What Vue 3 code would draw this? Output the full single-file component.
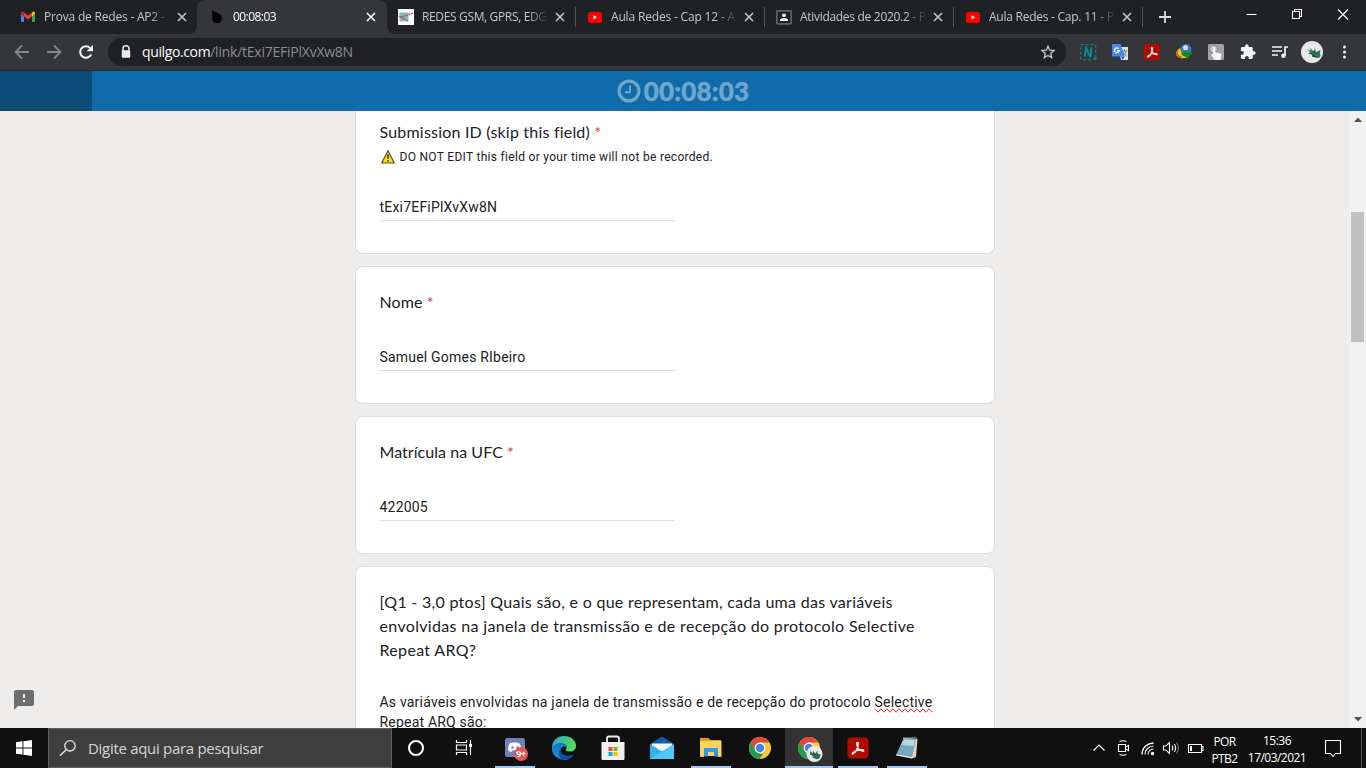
<script setup>
const tabs = [
  { icon: 'gmail', text: 'Prova de Redes - AP2 -', fit: 'f1' },
  { icon: 'drop', text: '00:08:03', fit: 'f2', active: true },
  { icon: 'redes', text: 'REDES GSM, GPRS, EDG', fit: 'f3' },
  { icon: 'youtube', text: 'Aula Redes - Cap 12 - A', fit: 'f4', sep: true },
  { icon: 'class', text: 'Atividades de 2020.2 - P', fit: 'f5', sep: true },
  { icon: 'youtube', text: 'Aula Redes - Cap. 11 - P', fit: 'f6', sep: true },
]
const fields = [
  { title: 'Nome', fit: 't2', value: 'Samuel Gomes RIbeiro', vfit: 'v2' },
  { title: 'Matrícula na UFC', fit: 't3', value: '422005', vfit: 'v3' },
]
</script>

<template>
  <div class="screen">
    <header class="strip">
      <div class="tabs">
        <div v-for="(t, i) in tabs" :key="i" class="tab" :class="{ active: t.active, sep: t.sep }">
          <svg v-if="t.icon === 'gmail'" class="fav" viewBox="0 0 16 16">
            <path d="M1 5v7.2c0 .5.4.8.8.8H4V7.2z" fill="#4285f4" />
            <path d="M15 5v7.2c0 .5-.4.8-.8.8H12V7.2z" fill="#34a853" />
            <path d="M12 3.6v3.8l3-2.2V4.2c0-1.4-1.500-2.100-2.500-1.200z" fill="#fbbc04" />
            <path d="M4 7.400V3.500l4 3 4-3v3.900l-4 3z" fill="#ea4335" />
            <path d="M1 4.200v1l3 2.200V3.500L3.500 3C2.500 2.100 1 2.800 1 4.200z" fill="#c5221f" />
          </svg>
          <svg v-else-if="t.icon === 'drop'" class="fav" viewBox="0 0 16 16">
            <path d="M3 1.300c3 2 6 2.500 8.300 4.300 2.600 2.500 2.200 8.400-3 8.400C4.500 14 3.300 11.500 3.300 8.500z" fill="#000" />
          </svg>
          <svg v-else-if="t.icon === 'redes'" class="fav" viewBox="0 0 16 16">
            <path d="M0 0h16v16H0z" fill="#fff" />
            <path d="M1.500 3.500h9v9h-9z" fill="#7fbdba" />
            <path d="M15 4 9 6.300 2 8l5 2.200 3 1.600" fill="none" stroke="#c2465a" stroke-width="1.200" stroke-dasharray="2 .6" />
          </svg>
          <svg v-else-if="t.icon === 'youtube'" class="fav" viewBox="0 0 16 16">
            <rect x="1" y="3" width="14" height="11" rx="2.500" fill="#f00" />
            <path d="M6.500 6.200v4.200L10 8.300z" fill="#fff" />
          </svg>
          <svg v-else class="fav" viewBox="0 0 16 16">
            <rect x=".8" y="1.800" width="14.400" height="13" rx="1" fill="#202124" stroke="#5f6368" stroke-width="1.800" />
            <circle cx="8" cy="6.300" r="1.900" fill="#f1f3f4" />
            <path d="M4 12v-1c0-1.400 2.500-2 4-2s4 .6 4 2v1z" fill="#f1f3f4" />
          </svg>
          <span class="label"><span :class="t.fit">{{ t.text }}</span></span>
          <svg class="x" viewBox="0 0 16 16"><path d="m4 4 8 8m0-8-8 8" /></svg>
        </div>
        <svg class="plus" viewBox="0 0 16 16"><path d="M8 2v12M2 8h12" stroke="#dadce0" stroke-width="1.800" /></svg>
      </div>
      <div class="winctl">
        <svg viewBox="0 0 46 28"><path d="M18.500 14.500h10" /></svg>
        <svg viewBox="0 0 46 28"><path d="M18.500 11.500h7v7h-7zM20.500 11.500v-2h7v7h-2" /></svg>
        <svg viewBox="0 0 46 28"><path d="m18 9.500 10 10m0-10-10 10" /></svg>
      </div>
    </header>

    <nav class="toolbar">
      <svg class="cell" viewBox="0 0 32 32"><path d="M23 16H10M16 9.500 9.500 16l6.500 6.500" fill="none" stroke="#85878a" stroke-width="1.800" /></svg>
      <svg class="cell" viewBox="0 0 32 32"><path d="M9 16H22M16 9.500l6.500 6.500-6.500 6.500" fill="none" stroke="#85878a" stroke-width="1.800" /></svg>
      <svg class="cell" viewBox="0 0 32 32"><path d="M21.200 18.500a5.800 5.800 0 1 1-1.100-6.600" fill="none" stroke="#f1f3f4" stroke-width="2.100" /><path d="M23 8.800v6.400h-6.400z" fill="#f1f3f4" /></svg>
      <div class="omni">
        <svg class="lock" viewBox="0 0 12 16"><path d="M3 7V4.800a3 3 0 0 1 6 0V7" fill="none" stroke="#e8eaed" stroke-width="1.500" /><rect x="1.800" y="6.300" width="8.400" height="7.500" rx="1" fill="#e8eaed" /></svg>
        <span class="url"><b>quilgo.com</b><i>/link/tExi7EFiPlXvXw8N</i></span>
        <svg class="star" viewBox="0 0 16 16"><path d="m8 2.200 1.700 4 4.300.4-3.300 2.800 1 4.200L8 11.400l-3.700 2.200 1-4.200L2 6.600l4.300-.4z" fill="none" stroke="#c8cacd" stroke-width="1.300" /></svg>
      </div>
      <svg class="cell" viewBox="0 0 32 32">
        <rect x="8.700" y="8.700" width="15" height="15" fill="none" stroke="#0f7f8a" stroke-width="1.200" stroke-dasharray="3 2" />
        <path d="M12.800 20.500c.6-3 .7-6 1.500-8.500 1.500 2 1.500 6 4 8.500.8-2.500.5-5.500 1-9" fill="none" stroke="#0b8794" stroke-width="2.200" />
        <path d="M21 22.500h5v3h-5z" fill="#35363a" /><path d="M23 20.500v4M21 22.500h4" stroke="#0f8b98" />
      </svg>
      <svg class="cell" viewBox="0 0 32 32">
        <path d="M14 11h10v13h-7z" fill="#d9dcdf" />
        <path d="M8 8h8.500l4.300 12.500H9.200C8.500 20.500 8 20 8 19.400z" fill="#4688f1" />
        <path d="m17 20.500 1.300 3.500 2.500-3.500z" fill="#2a56c6" />
        <path d="M14.600 12.600a2.400 2.400 0 1 0 .6 2h-2.300" fill="none" stroke="#fff" stroke-width="1.200" />
        <path d="M18 15h5m-2.500-1.500V15m1.500.2c-.5 2-1.500 3.300-3 4m0-3c.8 1.500 2 2.700 3.500 3.600" fill="none" stroke="#607d8b" />
      </svg>
      <svg class="cell" viewBox="0 0 32 32">
        <rect x="8" y="8" width="16" height="16" rx="2.500" fill="#b30b00" />
        <path d="M15.500 11.500c1.200-.6 1.300.8.800 3-.7 2.500-2 4.800-3.800 6.300-.8.500-1.400-.1-.5-.9 2.300-1.900 5.500-2.600 8.300-2.300 1.100.2 1.100 1.100.1 1-2.300-.1-4-2.200-4.800-4.500-.3-1.300-.5-2.200-.1-2.600z" fill="none" stroke="#fff" stroke-width="1.100" />
      </svg>
      <svg class="cell" viewBox="0 0 32 32">
        <circle cx="18" cy="13.500" r="5.500" fill="#3c74c4" /><circle cx="17.500" cy="11.800" r="2.500" fill="#d7e9f8" />
        <path d="M12.500 12c-5 2-6 7-1.500 9.500 3 1.500 6 .8 8-.5l-1-3c-3 .5-5.500-1-5.500-6z" fill="#f0c818" />
        <path d="M10 14.500c-2 2-1 5.500 3.500 7" fill="none" stroke="#d64b29" stroke-width="1.500" />
        <path d="m13 17.500 3-1.800 9 .8-7 7.500.3-3.200c-2 .3-4.300-1.300-5.300-3.300z" fill="#108a1c" />
      </svg>
      <svg class="cell" viewBox="0 0 32 32">
        <rect x="8" y="8" width="16" height="16" rx="1.500" fill="#a3a3a3" />
        <circle cx="13.500" cy="13" r="4" fill="#c9c9c9" stroke="#858585" />
        <path d="M13 12c0-1.200 2-1.200 2 0v4l5 1.200c1.300.3 1.500 1 1.300 2L20.500 24h-5.800L11.500 19.500c-.5-1 .5-1.600 1.500-.8z" fill="#f4f6f9" />
      </svg>
      <svg class="cell" viewBox="0 0 32 32"><path transform="translate(7.500 7.500) scale(.7)" d="M20.500 11H19V7c0-1.100-.9-2-2-2h-4V3.500a2.500 2.500 0 0 0-5 0V5H4c-1.100 0-2 .9-2 2v3.800h1.500a2.700 2.700 0 0 1 0 5.400H2V20c0 1.100.9 2 2 2h3.800v-1.500a2.700 2.700 0 0 1 5.400 0V22H17c1.100 0 2-.9 2-2v-4h1.500a2.500 2.500 0 0 0 0-5z" fill="#f1f3f4" /></svg>
      <svg class="cell" viewBox="0 0 32 32"><path d="M8 11h10M8 15h10M8 19h6M21 20V11h3" fill="none" stroke="#f1f3f4" stroke-width="1.700" /><circle cx="19.400" cy="19.800" r="2.200" fill="#f1f3f4" /></svg>
      <svg class="cell" viewBox="0 0 32 32"><circle cx="16" cy="16" r="11" fill="#e9e7e8" /><path d="m11 12.500 3.500 2.500-.5-3 3.500 3.500 1.500-3 1 3.500 4.500-2-.5 3 .5 3-1.500 2-4-.5-3.500-1.500 1-1-4.500-1.500 2-1z" fill="#2f7754" /><path d="m15 17 3 3m-1-5 3 3m-4 2 5 1" stroke="#173f2e" stroke-width=".9" /></svg>
      <svg class="cell" viewBox="0 0 32 32"><g fill="#f1f3f4"><circle cx="16.500" cy="11" r="1.500" /><circle cx="16.500" cy="16" r="1.500" /><circle cx="16.500" cy="21" r="1.500" /></g></svg>
    </nav>

    <div class="timer">
      <div class="progress"></div>
      <svg class="clockicon" viewBox="0 0 24 24"><circle cx="12" cy="12" r="9.900" fill="none" stroke="#6fa6cc" stroke-width="3.200" /><path d="M13 6.500v6.700H8" fill="none" stroke="#6fa6cc" stroke-width="1.900" /></svg>
      <span class="time">00:08:03</span>
    </div>

    <main class="page">
      <div class="form">
        <section class="card first">
          <h2><span class="t1">Submission ID (skip this field)</span> <em>*</em></h2>
          <p class="desc">
            <svg viewBox="0 0 14 14"><path d="M7 .8 13.300 13H.7z" fill="#ffe000" stroke="#4a4a45" stroke-width="1.200" stroke-linejoin="round" /><path d="M7 4.500v4.300M7 10v1.500" stroke="#222" stroke-width="1.500" /></svg>
            <span class="d1">DO NOT EDIT this field or your time will not be recorded.</span>
          </p>
          <div class="input"><span class="v1">tExi7EFiPlXvXw8N</span></div>
        </section>
        <section v-for="f in fields" :key="f.title" class="card">
          <h2><span :class="f.fit">{{ f.title }}</span> <em>*</em></h2>
          <div class="input"><span :class="f.vfit">{{ f.value }}</span></div>
        </section>
        <section class="card last">
          <h2>
            <span class="q1">[Q1 - 3,0 ptos] Quais são, e o que representam, cada uma das variáveis</span><br />
            <span class="q2">envolvidas na janela de transmissão e de recepção do protocolo Selective</span><br />
            <span class="q3">Repeat ARQ?</span>
          </h2>
          <p class="answer">
            <span class="a1">As variáveis envolvidas na janela de transmissão e de recepção do protocolo <u>Selective</u></span><br />
            <span class="a2">Repeat ARQ são:</span>
          </p>
        </section>
      </div>
      <svg class="report" viewBox="0 0 20 20"><path d="M18 0H2C.9 0 0 .9 0 2v18l4-4h14c1.100 0 2-.9 2-2V2c0-1.100-.9-2-2-2zm-7 12H9v-2h2zm0-4H9V4h2z" fill="#6e6e6e" /></svg>
      <div class="scroll">
        <svg viewBox="0 0 17 17"><path d="M5 11h8L9 6.500z" fill="#505050" /></svg>
        <div class="thumb"></div>
        <svg viewBox="0 0 17 17"><path d="M5 6h8l-4 4.500z" fill="#505050" /></svg>
      </div>
    </main>

    <footer class="task">
      <div class="start"><svg viewBox="0 0 16 16"><path d="M0 2.200 6.500 1.300v6.200H0zM7.400 1.200 16 0v7.500H7.400zM0 8.400h6.500v6.200L0 13.700zM7.400 8.400H16V16l-8.600-1.200z" fill="#fff" /></svg></div>
      <div class="search">
        <svg viewBox="0 0 18 18"><circle cx="11" cy="6.800" r="5.200" /><path d="M7.300 10.500 1 16.800" /></svg>
        <span>Digite aqui para pesquisar</span>
      </div>
      <div class="apps">
        <div class="app"><svg viewBox="0 0 28 28"><circle cx="14" cy="14" r="7" fill="none" stroke="#fff" stroke-width="2" /></svg></div>
        <div class="app"><svg viewBox="0 0 28 28"><path d="M6.500 6v2.500h10V6M6.500 21v-2.500h10V21M6.500 11h10v5h-10zM20.500 6v15" fill="none" stroke="#fff" stroke-width="1.200" /><path d="M19 10h3v3h-3z" fill="#fff" /></svg></div>
        <div class="app run a515">
          <svg viewBox="0 0 28 28">
            <rect x="4" y="4" width="20" height="19" rx="2" fill="#6f80bd" />
            <path d="M8.500 9.500c2-1.300 7.500-1.300 10 0 1.500 2.500 2 5 1.800 7-1.200 1-2.500 1.300-3.300 1.300l-1-1.500h-4.500l-1 1.500c-1.200 0-2.400-.5-3.300-1.300-.2-2 .3-4.500 1.300-7z" fill="#fff" /><circle cx="11.500" cy="13.500" r="1.300" fill="#6f80bd" /><circle cx="16.500" cy="13.500" r="1.300" fill="#6f80bd" />
          </svg>
          <span class="badge">9+</span>
        </div>
        <div class="app a563"><svg viewBox="0 0 28 28">
          <defs>
            <linearGradient id="eg" x1="0" y1="0" x2="1" y2=".3"><stop offset="0" stop-color="#23a6dd" /><stop offset="1" stop-color="#57d957" /></linearGradient>
            <linearGradient id="eb" x1="0" y1="0" x2="0" y2="1"><stop offset="0" stop-color="#1678c8" /><stop offset="1" stop-color="#1b8bd8" /></linearGradient>
          </defs>
          <path d="M2 14C2 6 8 2 14 2c8 0 12.500 5.500 12 10.500-.4 4-4 5.500-7 5-2.500-.4-4-1-3-2.500 1.600-2 .4-4.700-3-5.300C8.500 9 4 11 2 14z" fill="url(#eg)" />
          <path d="M2 14c1.500-3.500 5-5.500 9-5 3 .4 5 2 5.500 4-4-2-7 1.500-5.500 5 1.500 3.800 6.500 5.500 12.500 2.500C20 26 15 26.500 11.500 25.500 5 24 1.500 19 2 14z" fill="url(#eb)" />
          <path d="M11 14c-2 6 4 10 12.500 6.500-2.500 4.500-7 5.800-11 5.200-3.500-2-5-7.700-1.500-11.700z" fill="#0d4f9e" />
        </svg></div>
        <div class="app a612"><svg viewBox="0 0 28 28"><path d="M8 8.500V4.500C8 3 8.500 2.500 10 2.500h8c1.500 0 2 .5 2 2v4" fill="none" stroke="#eee" stroke-width="1.800" /><path d="M2.500 8h23v16.500c0 1-.5 1.500-1.500 1.500H4c-1 0-1.500-.5-1.500-1.500z" fill="#f0f0f0" /><path d="M9.500 13h4v4h-4z" fill="#f25022" /><path d="M14.500 13h4v4h-4z" fill="#7fba00" /><path d="M9.500 18h4v4h-4z" fill="#00a4ef" /><path d="M14.500 18h4v4h-4z" fill="#ffb900" /></svg></div>
        <div class="app a662"><svg viewBox="0 0 28 28"><path d="m2 10 12-7.500L26 10v15H2z" fill="#0f5fae" /><path d="M4 9.500h20v8H4z" fill="#f6f6f6" /><path d="m2 10 12 7.500L26 10v15H2z" fill="#31b1ee" /><path d="m2 25 12-7.500L26 10v15z" fill="#50c8fb" /></svg></div>
        <div class="app run a711"><svg viewBox="0 0 28 28"><path d="M3 4h8.500l2 2H24v5H3z" fill="#e8a20d" /><path d="M3 7h21.500v15H3z" fill="#fcd462" /><path d="M7 14h14v8.500h-4V18h-6v4.500H7z" fill="#3b97e0" /><path d="M3 22h4v1H3zM21 22h3.500v1H21z" fill="#e8b63b" /></svg></div>
        <div v-for="n in 2" :key="n" class="app" :class="n === 1 ? 'a760' : 'current'">
          <svg viewBox="0 0 28 28">
            <circle cx="14" cy="14" r="11" fill="#fcc934" />
            <path d="M4.500 8.500A11 11 0 0 1 23.500 8.500H14L8.500 16z" fill="#e04a3d" />
            <path d="M4.500 8.500 10 17l4 2.500 3 .5-3.500 5A11 11 0 0 1 4.500 8.500z" fill="#219c54" />
            <circle cx="14" cy="14" r="5.400" fill="#fff" /><circle cx="14" cy="14" r="4.200" fill="#3f83ee" />
            <template v-if="n === 2"><circle cx="19.500" cy="20" r="8" fill="#e9e9e9" /><path d="m15 17 3 2.500-.5-3 3 3 2-3v3l3 1-1 4-3 .7-4.500-2 1.500-.7-3.500-2z" fill="#2b6a4c" /></template>
          </svg>
        </div>
        <div class="app run a858"><svg viewBox="0 0 28 28"><rect x="3.500" y="3.500" width="21" height="21" rx="4" fill="#b30b00" /><path d="M13 8.500c1.500-.7 1.600 1 1 3.700-.9 3-2.500 6-4.700 7.600-1 .6-1.700-.2-.6-1.100 2.900-2.300 6.500-3.100 10-2.700 1.400.2 1.400 1.300.1 1.200-2.800-.2-4.800-2.600-5.800-5.400-.4-1.600-.6-2.800 0-3.300z" fill="none" stroke="#fff" stroke-width="1.300" /></svg></div>
        <div class="app run a906"><svg viewBox="0 0 28 28"><path d="m10 4 14.500 1-1.500 18-4 1.500z" fill="#d9d5c5" /><path d="M10.500 4.500 23 5l-4 18-15.500-3z" fill="#76a9bb" /><path d="M11 5.500 22 6l-1.500 6L8 11z" fill="#b3d8e2" /><path d="m3.500 20 15.500 3v1.500L3 21.500z" fill="#eee" /><path d="M10.500 4h13" stroke="#c8c8c8" stroke-dasharray="1 1" stroke-width="1.500" /></svg></div>
      </div>
      <div class="tray">
        <svg class="w24" viewBox="0 0 24 24"><path d="m6.500 14.500 5.500-5.500 5.500 5.500" /></svg>
        <svg class="w24" viewBox="0 0 24 24"><path d="M7.500 8.500h7v7h-7zM14.500 11l3-1.500v5l-3-1.500M8.500 5.500q3.500-1.500 7 0M8.500 18.500q3.500 1.500 7 0" /></svg>
        <svg class="w25" viewBox="0 0 25 24"><path d="M7 18.500A11.500 11.500 0 0 1 18.500 7" stroke="#888" /><path d="M10 18.500a8.500 8.500 0 0 1 8.500-8.500M13 18.500a5.500 5.500 0 0 1 5.500-5.500M7 17.500q.5-9 11.500-10.500" /><circle cx="17.500" cy="17.500" r="1.700" fill="#fff" stroke="none" /></svg>
        <svg class="w22" viewBox="0 0 22 24"><path d="M3.500 10v4h2.500l3.500 3.500v-11L6 10z" /><path d="M12 9.500q1.800 2.500 0 5M14.200 8q3 4 0 8" /><path class="dim" d="M16.500 6.500q4 5.500 0 11" /></svg>
        <svg class="w28" viewBox="0 0 28 24"><path d="M6.500 8.500h13v8h-13zM20 10.500h1v4h-1" /><path class="solid" d="M8 10h2v5H8z" /></svg>
        <div class="two lang"><span class="l1">POR</span><span class="l2">PTB2</span></div>
        <div class="two when"><span class="c1">15:36</span><span class="c2">17/03/2021</span></div>
        <svg class="w44" viewBox="0 0 44 24"><path d="M14.500 4.500h15v13h-5l-2.500 3-2.500-3h-5z" /></svg>
        <div class="peek"></div>
      </div>
    </footer>
  </div>
</template>

<style>
body { margin: 0; background: #eeedeb; overflow: hidden; }
</style>

<style scoped>
.screen { width: 1366px; height: 768px; display: flex; flex-direction: column; overflow: hidden; font-family: "Open Sans", "Noto Sans", sans-serif; }
svg { display: block; flex: none; }
.strip { height: 34px; background: #202124; display: flex; justify-content: space-between; flex: none; }
.tabs { display: flex; padding-left: 8px; align-items: stretch; }
.tab { width: 189px; box-sizing: border-box; padding-left: 12px; display: flex; align-items: center; position: relative; }
.tab.active { background: #35363a; border-radius: 8px 8px 0 0; width: 190px; margin-right: -1px; }
.tab.active::before, .tab.active::after { content: ""; position: absolute; bottom: 0; width: 8px; height: 8px; }
.tab.active::before { left: -8px; background: radial-gradient(circle at 0 0, #202124 7.5px, #35363a 8px); }
.tab.active::after { right: -8px; background: radial-gradient(circle at 100% 0, #202124 7.5px, #35363a 8px); }
.tab.sep::before { content: ""; position: absolute; left: 0; top: 7px; width: 1px; height: 20px; background: #53555a; }
.tab:nth-child(6)::after { content: ""; position: absolute; right: -1px; top: 7px; width: 1px; height: 20px; background: #53555a; }
.fav { width: 16px; height: 16px; margin-right: 8px; }
.label { width: 127px; font-size: 12px; line-height: 20px; color: #c4c8cd; white-space: nowrap; overflow: hidden; -webkit-mask-image: linear-gradient(90deg, #000 105px, transparent 127px); mask-image: linear-gradient(90deg, #000 105px, transparent 127px); }
.active .label { color: #fff; }
.x { width: 16px; height: 16px; margin-left: 3px; }
.x path { stroke: #c4c7cb; stroke-width: 1.6; }
.active .x path { stroke: #fff; }
.plus { width: 16px; height: 16px; margin-left: 15px; align-self: center; }
.winctl { display: flex; }
.winctl svg { width: 46px; height: 28px; }
.winctl path { fill: none; stroke: #fff; stroke-width: 1.1; }
.f1 { letter-spacing: -.2px; }
.f2 { letter-spacing: -.55px; }
.f3 { letter-spacing: -.35px; }
.f4 { letter-spacing: -.17px; }
.f5 { letter-spacing: -.3px; }
.f6 { letter-spacing: -.25px; }

.toolbar { height: 36px; background: #35363a; border-bottom: 1px solid #29292b; display: flex; align-items: center; padding-left: 6px; flex: none; }
.cell { width: 32px; height: 32px; }
.omni { width: 958px; height: 28px; margin: 0 6px; border-radius: 14px; background: #202124; display: flex; align-items: center; box-sizing: border-box; padding: 0 10px 0 12px; }
.lock { width: 12px; height: 16px; }
.url { font-size: 14px; line-height: 20px; margin-left: 10px; flex: 1; white-space: nowrap; }
.url b { font-weight: 400; color: #fff; letter-spacing: -.38px; }
.url i { font-style: normal; color: #8b8e92; letter-spacing: -.24px; }
.star { width: 16px; height: 16px; }

.timer { height: 40px; background: #0f6ba9; display: flex; align-items: center; justify-content: center; position: relative; flex: none; }
.progress { position: absolute; left: 0; top: 0; width: 92px; height: 40px; background: #0a4b77; }
.clockicon { width: 24px; height: 24px; margin-right: 3px; }
.time { font: 900 26px/40px Lato, sans-serif; color: #6fa6cc; letter-spacing: .2px; -webkit-text-stroke: .4px #6fa6cc; }

.page { height: 617px; background: #eeedeb; position: relative; overflow: hidden; flex: none; }
.form { width: 640px; margin-left: 355px; display: flex; flex-direction: column; gap: 12px; }
.card { background: #fff; border: 1px solid #dadce0; border-radius: 8px; box-sizing: border-box; padding: 23px 24px 32px; }
.first { border-top: 0; border-radius: 0 0 8px 8px; padding-top: 9px; }
.last { height: 200px; }
h2 { margin: 0 0 0 -.5px; font: 400 16px/24px Lato, sans-serif; color: #202124; white-space: nowrap; }
h2 em { font-style: normal; color: #d93025; }
.desc { margin: 5px 0 0; display: flex; align-items: center; font: 12px/16px Roboto, sans-serif; color: #202124; white-space: nowrap; }
.desc svg { width: 14px; height: 14px; margin: 0 4.5px 0 1px; }
.input { width: 295px; height: 25px; margin-top: 31px; border-bottom: 1px solid #dcdcdc; font: 14px/24px Roboto, sans-serif; color: #202124; white-space: nowrap; }
.first .input { margin-top: 30px; }
.input span { margin-left: -.5px; }
.answer { margin: 30px 0 0 -.5px; font: 14px/20px Roboto, sans-serif; color: #202124; white-space: nowrap; }
.answer u { text-decoration: spelling-error; }
.t1 { letter-spacing: .2px; }
.t2 { letter-spacing: .1px; }
.t3 { letter-spacing: .05px; }
.d1 { letter-spacing: .3px; }
.v1, .v2, .v3, .a1, .a2 { letter-spacing: .2px; }
.q1 { letter-spacing: .29px; }
.q2 { letter-spacing: .335px; }
.q3 { letter-spacing: .33px; }
.report { position: absolute; left: 14px; top: 579px; width: 20px; height: 20px; }
.scroll { position: absolute; right: 0; top: 0; width: 17px; height: 617px; background: #f1f1f1; display: flex; flex-direction: column; justify-content: space-between; }
.scroll svg { width: 17px; height: 17px; }
.thumb { width: 13px; height: 130px; background: #c1c1c1; margin: 84px 0 auto 2px; }

.task { height: 40px; background: #101010; display: flex; position: relative; flex: none; }
.start { width: 48px; display: flex; align-items: center; justify-content: center; }
.start svg { width: 16px; height: 16px; }
.search { width: 344px; height: 40px; box-sizing: border-box; background: #3f3f3f; border: 1px solid #606060; display: flex; align-items: center; padding-left: 10px; color: #d6d6d6; font-size: 15px; line-height: 20px; white-space: nowrap; }
.search svg { width: 18px; height: 18px; margin-right: 11px; }
.search svg * { fill: none; stroke: #e2e2e2; stroke-width: 1.4; }
.search span { letter-spacing: -.3px; }
.apps { display: flex; flex: 1; }
.app { width: 48px; height: 40px; display: flex; align-items: center; justify-content: center; position: relative; }
.app svg { width: 28px; height: 28px; }
.run::after { content: ""; position: absolute; left: 4px; right: 4px; bottom: 0; height: 2px; background: #a6c8f0; }
.a515 { margin-left: 3px; }
.a563, .a612, .a662, .a711, .a760, .a858, .a906 { margin-left: 1px; }
.current { background: #333; margin-left: 1px; box-shadow: inset 0 -2px #a6c8f0; }
.badge { position: absolute; left: 23px; top: 19px; width: 14px; height: 14px; border-radius: 50%; background: #ee5454; color: #fff; font-weight: 700; font-size: 9px; line-height: 14px; text-align: center; letter-spacing: -.4px; }
.tray { width: 279px; display: flex; align-items: center; flex: none; }
.tray svg { height: 24px; }
.tray svg path { fill: none; stroke: #fff; stroke-width: 1.1; }
.tray svg .dim { stroke: #777; }
.tray svg .solid { fill: #fff; stroke: none; }
.w24 { width: 24px; }
.w25 { width: 25px; }
.w22 { width: 22px; }
.w28 { width: 28px; }
.w44 { width: 44px; }
.two { display: flex; flex-direction: column; align-items: center; color: #fff; font-size: 12px; line-height: 17px; white-space: nowrap; }
.lang { width: 29px; margin-top: 3px; }
.when { width: 76px; margin: 1px -4px 0 0; }
.lang span { letter-spacing: -.6px; }
.when span { letter-spacing: -.53px; }
.peek { width: 1px; height: 40px; margin-left: 6px; background: #555; }
</style>
